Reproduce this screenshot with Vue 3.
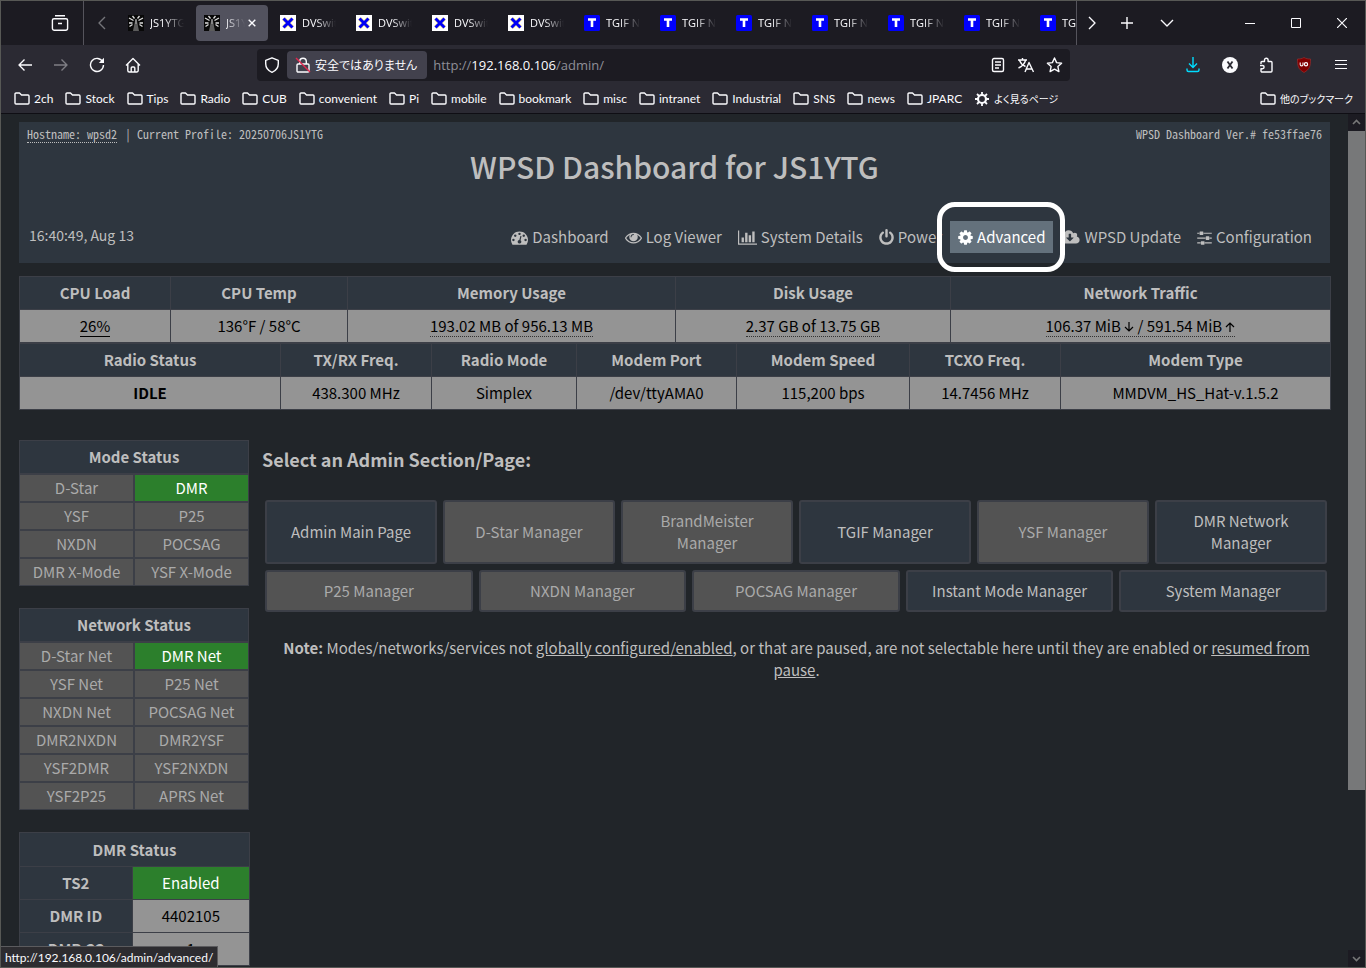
<script setup>
const tabs = [
  { kind: 'mast', title: 'JS1YTG' },
  { kind: 'mast', title: 'JS1YTG', active: true },
  ...Array.from({ length: 4 }, () => ({ kind: 'x', title: 'DVSwitch' })),
  ...Array.from({ length: 7 }, () => ({ kind: 't', title: 'TGIF Net' })),
]

const bookmarks = ['2ch', 'Stock', 'Tips', 'Radio', 'CUB', 'convenient', 'Pi', 'mobile', 'bookmark', 'misc', 'intranet', 'Industrial', 'SNS', 'news', 'JPARC']

const navLinks = [
  { label: 'Dashboard', box: '0 0 1792 1792', size: 'w17', d: 'M384 1152q0-53-37.5-90.5t-90.5-37.5-90.5 37.5-37.5 90.5 37.5 90.5 90.5 37.5 90.5-37.5 37.5-90.5zm192-448q0-53-37.5-90.5t-90.5-37.5-90.5 37.5-37.5 90.5 37.5 90.5 90.5 37.5 90.5-37.5 37.5-90.5zm428 481l101-382q6-26-7.5-48.5t-38.5-29.5-48 6.5-30 39.5l-101 382q-60 5-107 43.5t-63 98.5q-20 77 20 146t117 89 146-20 89-117q16-60-6-117t-72-91zm660-33q0-53-37.5-90.5t-90.5-37.5-90.5 37.5-37.5 90.5 37.5 90.5 90.5 37.5 90.5-37.5 37.5-90.5zm-640-640q0-53-37.5-90.5t-90.5-37.5-90.5 37.5-37.5 90.5 37.5 90.5 90.5 37.5 90.5-37.5 37.5-90.5zm448 192q0-53-37.5-90.5t-90.5-37.5-90.5 37.5-37.5 90.5 37.5 90.5 90.5 37.5 90.5-37.5 37.5-90.5zm320 448q0 261-141 483-19 29-54 29h-1402q-35 0-54-29-141-221-141-483 0-182 71-348t191-286 286-191 348-71 348 71 286 191 191 286 71 348z' },
  { label: 'Log Viewer', box: '0 0 1792 1792', size: 'w17', d: 'M1664 960q-152-236-381-353 61 104 61 225 0 185-131.5 316.5t-316.5 131.5-316.5-131.5-131.5-316.5q0-121 61-225-229 117-381 353 133 205 333.5 326.5t434.5 121.5 434.5-121.5 333.5-326.5zm-720-384q0-20-14-34t-34-14q-125 0-214.5 89.5t-89.5 214.5q0 20 14 34t34 14 34-14 14-34q0-86 61-147t147-61q20 0 34-14t14-34zm848 384q0 34-20 69-140 230-376.5 368.5t-499.5 138.5-499.5-139-376.5-368q-20-35-20-69t20-69q140-229 376.5-368t499.5-139 499.5 139 376.5 368q20 35 20 69z' },
  { label: 'System Details', box: '0 0 2048 1792', size: 'w19', d: 'M640 896v512h-256v-512h256zm384-512v1024h-256v-1024h256zm1024 1152v128h-2048v-1536h128v1408h1920zm-640-896v768h-256v-768h256zm384-384v1152h-256v-1152h256z' },
  { label: 'Power', box: '128 0 1536 1792', size: 'w15', d: 'M1664 896q0 156-61 298t-164 245-245 164-298 61-298-61-245-164-164-245-61-298q0-182 80.5-343t226.5-270q43-32 95.5-25t83.5 50q32 42 24.5 94.5t-49.5 84.5q-98 74-151.5 181t-53.5 228q0 104 40.5 198.5t109.5 163.5 163.5 109.5 198.5 40.5 198.5-40.5 163.5-109.5 109.5-163.5 40.5-198.5q0-121-53.5-228t-151.5-181q-42-32-49.5-84.5t24.5-94.5q31-43 84-50t95 25q146 109 226.5 270t80.5 343zm-640-768v640q0 52-38 90t-90 38-90-38-38-90v-640q0-52 38-90t90-38 90 38 38 90z' },
  { label: 'Advanced', active: true, box: '128 0 1536 1792', size: 'w15', d: 'M1152 896q0-106-75-181t-181-75-181 75-75 181 75 181 181 75 181-75 75-181zm512-109v222q0 12-8 23t-20 13l-185 28q-19 54-39 91 35 50 107 138 10 12 10 25t-9 23q-27 37-99 108t-94 71q-12 0-26-9l-138-108q-44 23-91 38-16 136-29 186-7 28-36 28h-222q-14 0-24.5-8.5t-11.5-21.5l-28-184q-49-16-90-37l-141 107q-10 9-25 9-14 0-25-11-126-114-165-168-7-10-7-23 0-12 8-23 15-21 51-66.5t54-70.5q-27-50-41-99l-183-27q-13-2-21-12.5t-8-23.5v-222q0-12 8-23t19-13l186-28q14-46 39-92-40-57-107-138-10-12-10-24 0-10 9-23 26-36 98.5-107.5t94.5-71.5q13 0 26 10l138 107q44-23 91-38 16-136 29-186 7-28 36-28h222q14 0 24.5 8.5t11.5 21.5l28 184q49 16 90 37l142-107q9-9 24-9 13 0 25 10 129 119 165 170 7 8 7 22 0 12-8 23-15 21-51 66.5t-54 70.5q26 50 41 98l183 28q13 2 21 12.5t8 23.5z' },
  { label: 'WPSD Update', box: '0 0 1920 1792', size: 'w19', d: 'M1280 928q0-14-9-23t-23-9h-224v-352q0-13-9.5-22.5t-22.5-9.5h-192q-13 0-22.5 9.5t-9.5 22.5v352h-224q-13 0-22.5 9.5t-9.5 22.5q0 14 9 23l352 352q9 9 23 9t23-9l351-351q10-12 10-24zm640 224q0 159-112.5 271.5t-271.5 112.5h-1088q-185 0-316.5-131.5t-131.5-316.5q0-130 70-240t188-165q-2-30-2-43 0-212 150-362t362-150q156 0 285.5 87t188.5 231q71-62 166-62 106 0 181 75t75 181q0 76-41 138 130 31 213.5 135.5t83.5 238.5z' },
  { label: 'Configuration', box: '0 0 1536 1792', size: 'w15', d: 'M352 1408v128h-352v-128h352zm352-128q26 0 45 19t19 45v256q0 26-19 45t-45 19h-256q-26 0-45-19t-19-45v-256q0-26 19-45t45-19h256zm160-384v128h-864v-128h864zm-640-512v128h-224v-128h224zm1312 1024v128h-736v-128h736zm-960-1152q26 0 45 19t19 45v256q0 26-19 45t-45 19h-256q-26 0-45-19t-19-45v-256q0-26 19-45t45-19h256zm640 512q26 0 45 19t19 45v256q0 26-19 45t-45 19h-256q-26 0-45-19t-19-45v-256q0-26 19-45t45-19h256zm320 128v128h-224v-128h224zm0-512v128h-864v-128h864z' },
]

const hardware = [
  { head: 'CPU Load', value: '26%', mark: 'solid', span: 151 },
  { head: 'CPU Temp', value: '136°F / 58°C', span: 177 },
  { head: 'Memory Usage', value: '193.02 MB of 956.13 MB', mark: 'dotted', span: 328 },
  { head: 'Disk Usage', value: '2.37 GB of 13.75 GB', mark: 'dotted', span: 275 },
  { head: 'Network Traffic', traffic: ['106.37 MiB', '/ 591.54 MiB'], mark: 'dotted', span: 380 },
]
const radio = [
  { head: 'Radio Status', value: 'IDLE', bold: true, span: 261 },
  { head: 'TX/RX Freq.', value: '438.300 MHz', span: 151 },
  { head: 'Radio Mode', value: 'Simplex', span: 145 },
  { head: 'Modem Port', value: '/dev/ttyAMA0', span: 160 },
  { head: 'Modem Speed', value: '115,200 bps', span: 173 },
  { head: 'TCXO Freq.', value: '14.7456 MHz', span: 151 },
  { head: 'Modem Type', value: 'MMDVM_HS_Hat-v.1.5.2', span: 270 },
]
const share = (n) => ({ width: (n / 1311) * 100 + '%' })

const panels = [
  { title: 'Mode Status', rows: [['D-Star', 'DMR'], ['YSF', 'P25'], ['NXDN', 'POCSAG'], ['DMR X-Mode', 'YSF X-Mode']] },
  { title: 'Network Status', rows: [['D-Star Net', 'DMR Net'], ['YSF Net', 'P25 Net'], ['NXDN Net', 'POCSAG Net'], ['DMR2NXDN', 'DMR2YSF'], ['YSF2DMR', 'YSF2NXDN'], ['YSF2P25', 'APRS Net']] },
]
const enabled = ['DMR', 'DMR Net']

const sections = [
  [
    { label: 'Admin Main Page' }, { label: 'D-Star Manager', off: true }, { label: 'BrandMeister Manager', off: true },
    { label: 'TGIF Manager' }, { label: 'YSF Manager', off: true }, { label: 'DMR Network Manager' },
  ],
  [
    { label: 'P25 Manager', off: true }, { label: 'NXDN Manager', off: true }, { label: 'POCSAG Manager', off: true },
    { label: 'Instant Mode Manager' }, { label: 'System Manager' },
  ],
]
</script>

<template>
  <div class="window">
    <header class="chrome">
      <div class="tabstrip">
        <button class="tool overview" aria-label="Recent browsing">
          <svg width="18" height="18" viewBox="0 0 18 18"><path d="M4 1.700h10M3 4.700h12a1.600 1.600 0 0 1 1.600 1.600v8a2 2 0 0 1-2 2H3.400a2 2 0 0 1-2-2v-8A1.600 1.600 0 0 1 3 4.700zM7 9.500h4" /></svg>
        </button>
        <button class="tool scroll-left" aria-label="Scroll left"><svg width="10" height="14" viewBox="0 0 10 14"><path d="M8 1L2 7l6 6" /></svg></button>
        <div class="tabs">
          <button v-for="(tab, i) in tabs" :key="i" class="tab" :class="{ active: tab.active }">
            <svg v-if="tab.kind === 'mast'" class="fav" viewBox="0 0 16 16">
              <rect width="16" height="16" fill="#080808" />
              <path d="M7.200 5h1.600L11 16H5z" fill="#5c5c5c" /><path d="M8 4v5" stroke="#999" />
              <path d="M1 3l4.500 2.500M4.500 1l2 2.500M1 8h3.500M1.500 11.500l3-2M15 3l-4.500 2.500M11.500 1l-2 2.500M15 8h-3.500M14.500 11.500l-3-2" stroke="#dedede" stroke-width="1.300" />
            </svg>
            <svg v-else-if="tab.kind === 'x'" class="fav" viewBox="0 0 16 16">
              <rect width="16" height="16" fill="#fff" /><path d="M3.500 3.500l9 9M12.500 3.500l-9 9" stroke="#ffef9a" stroke-width="4.500" /><path d="M3.500 3.500l9 9M12.500 3.500l-9 9" stroke="#0000f5" stroke-width="3" />
            </svg>
            <svg v-else class="fav" viewBox="0 0 16 16"><rect width="16" height="16" rx="1.500" fill="#0000fa" /><path d="M4 4.500h8M8 4v8" fill="none" stroke="#fff" stroke-width="2.600" /></svg>
            <span class="tab-title">{{ tab.title }}</span>
            <svg v-if="tab.active" class="tab-close" width="8" height="8" viewBox="0 0 8 8"><path d="M.7.7l6.600 6.600M7.300.7L.7 7.300" /></svg>
          </button>
        </div>
        <button class="tool after-tabs" aria-label="Scroll right"><svg width="10" height="14" viewBox="0 0 10 14"><path d="M2 1l6 6-6 6" /></svg></button>
        <button class="tool narrow" aria-label="New tab"><svg width="12" height="12" viewBox="0 0 12 12"><path d="M6 0v12M0 6h12" /></svg></button>
        <button class="tool list-tabs" aria-label="List tabs"><svg width="14" height="10" viewBox="0 0 14 10"><path d="M1 2l6 6 6-6" /></svg></button>
        <div class="window-buttons">
          <button class="tool" aria-label="Minimise"><svg width="10" height="10" viewBox="0 0 10 10"><path d="M0 5.500h10" stroke-width="1" /></svg></button>
          <button class="tool" aria-label="Maximise"><svg width="10" height="10" viewBox="0 0 10 10"><path d="M.5.5h9v9h-9z" stroke-width="1" /></svg></button>
          <button class="tool" aria-label="Close"><svg width="10" height="10" viewBox="0 0 10 10"><path d="M0 0l10 10M10 0L0 10" stroke-width="1.200" /></svg></button>
        </div>
      </div>

      <div class="toolbar">
        <div class="history">
          <button class="tool" aria-label="Back"><svg width="16" height="16" viewBox="0 0 16 16"><path d="M15 8H2M7.500 2.500L2 8l5.500 5.500" /></svg></button>
          <button class="tool dim" aria-label="Forward"><svg width="16" height="16" viewBox="0 0 16 16"><path d="M1 8h13M8.500 2.500L14 8l-5.500 5.500" /></svg></button>
          <button class="tool" aria-label="Reload"><svg width="16" height="16" viewBox="0 0 16 16"><path d="M13.800 5A6.500 6.500 0 1 0 14.500 8" /><path d="M15 .8V6H9.800z" fill="#fbfbfe" stroke="none" /></svg></button>
          <button class="tool" aria-label="Home"><svg width="16" height="16" viewBox="0 0 16 16"><path d="M1 8.500L8 1.500l7 7M2.800 7v6.500a1.500 1.500 0 0 0 1.500 1.500h7.400a1.500 1.500 0 0 0 1.500-1.500V7M6.200 15v-4a1 1 0 0 1 1-1h1.600a1 1 0 0 1 1 1v4" /></svg></button>
        </div>
        <div class="urlbar">
          <button class="tool shield" aria-label="Tracking protection"><svg width="16" height="16" viewBox="0 0 16 16"><path d="M8 .8l6.300 2.500v3.400c0 4-2.500 7-6.300 8.600C4.200 13.700 1.700 10.700 1.700 6.700V3.300z" /></svg></button>
          <button class="identity">
            <svg width="16" height="16" viewBox="0 0 16 16"><path d="M4.700 7V4.500a3.300 3.300 0 0 1 6.600 0V7M3 7h10a1 1 0 0 1 1 1v6a1 1 0 0 1-1 1H3a1 1 0 0 1-1-1V8a1 1 0 0 1 1-1z" /><path d="M1 1l14 14" class="slash" /></svg>
            安全ではありません
          </button>
          <div class="address" role="textbox" contenteditable="true" spellcheck="false" aria-label="Address">http://<span class="host">192.168.0.106</span>/admin/</div>
          <button class="tool url-tool" aria-label="Reader view"><svg width="16" height="16" viewBox="0 0 16 16"><path d="M4 1.500h8a1.500 1.500 0 0 1 1.500 1.500v10a1.500 1.500 0 0 1-1.500 1.500H4A1.500 1.500 0 0 1 2.500 13V3A1.500 1.500 0 0 1 4 1.500zM5 5h6M5 8h6M5 11h4" /></svg></button>
          <button class="tool url-tool" aria-label="Translate"><svg width="18" height="16" viewBox="0 0 18 16"><path d="M1 3h9M5.500 1v2M2.500 3.500C4 7 6 8.500 8.500 9.500M8.500 3.500C7.500 7 5 9.500 1.500 11M8 15l4-9.500 4.500 9.500M9.500 12h5.500" /></svg></button>
          <button class="tool url-tool" aria-label="Bookmark"><svg width="17" height="16" viewBox="0 0 16 16"><path d="M8 1l2.100 4.600 5 .6-3.700 3.400 1 5L8 12.100 3.600 14.600l1-5L.9 6.200l5-.6z" /></svg></button>
        </div>
        <div class="extensions">
          <button class="tool" aria-label="Downloads"><svg class="cyan" width="14" height="16" viewBox="0 0 14 16"><path d="M7 0v10.500M3 6.500l4 4 4-4M1 11.500V13a1.500 1.500 0 0 0 1.500 1.500h9A1.500 1.500 0 0 0 13 13v-1.500" /></svg></button>
          <button class="tool" aria-label="Account"><svg width="16" height="16" viewBox="0 0 16 16"><circle cx="8" cy="8" r="8" fill="#fbfbfe" stroke="none" /><path d="M5.500 4.500l5 7M10.500 4.500l-5 7" stroke="#2b2a33" stroke-width="1.800" /></svg></button>
          <button class="tool" aria-label="Extensions"><svg width="16" height="16" viewBox="0 0 16 16"><path d="M2 7V5.500a1 1 0 0 1 1-1h2.500V3a1.800 1.800 0 0 1 3.600 0v1.500H12a1 1 0 0 1 1 1V14a1 1 0 0 1-1 1H3a1 1 0 0 1-1-1v-2.300h1.500a1.600 1.600 0 0 0 0-3.200H1" /></svg></button>
          <button class="tool" aria-label="uBlock Origin"><svg width="16" height="16" viewBox="0 0 16 16"><path d="M8 .5c2 1.200 4 1.500 6.500 1.500 0 7-.5 10-6.500 13.500C2 12 1.500 9 1.500 2 4 2 6 1.700 8 .5z" fill="#800000" stroke="#a23030" stroke-width=".6" /><path d="M4.200 5.500v2a1.300 1.300 0 0 0 2.800 0v-2" stroke-width="1.100" /><circle cx="10" cy="7.200" r="1.600" stroke-width="1.200" /></svg></button>
          <button class="tool" aria-label="Menu"><svg width="12" height="12" viewBox="0 0 12 12"><path d="M0 1.500h12M0 5.500h12M0 9.500h12" stroke-width="1.200" /></svg></button>
        </div>
      </div>

      <nav class="bookmarks" aria-label="Bookmarks">
        <a v-for="name in bookmarks" :key="name" href="#"><svg class="folder" width="16" height="16" viewBox="0 0 16 16"><path d="M2 2h3.500l2 2H14a1 1 0 0 1 1 1v7a1 1 0 0 1-1 1H2a1 1 0 0 1-1-1V3a1 1 0 0 1 1-1z" /></svg>{{ name }}</a>
        <a href="#"><svg width="16" height="16" viewBox="0 0 16 16"><circle cx="8" cy="8" r="4" stroke-width="2.200" /><path d="M8 1v3M8 12v3M1 8h3M12 8h3M3 3l2.200 2.200M10.800 10.800L13 13M13 3l-2.200 2.200M5.200 10.800L3 13" stroke-width="1.800" /></svg><span class="ja">よく見るページ</span></a>
        <a href="#" class="other"><svg class="folder" width="16" height="16" viewBox="0 0 16 16"><path d="M2 2h3.500l2 2H14a1 1 0 0 1 1 1v7a1 1 0 0 1-1 1H2a1 1 0 0 1-1-1V3a1 1 0 0 1 1-1z" /></svg><span class="ja">他のブックマーク</span></a>
      </nav>
    </header>

    <div class="viewport">
      <main class="page">
        <section class="banner">
          <div class="meta">
            <span><a href="#" class="hostname">Hostname: wpsd2</a> | Current Profile: 20250706JS1YTG</span>
            <span>WPSD Dashboard Ver.# fe53ffae76</span>
          </div>
          <h1>WPSD Dashboard for JS1YTG</h1>
          <div class="navrow">
            <time>16:40:49, Aug 13</time>
            <nav class="mainnav">
              <a v-for="link in navLinks" :key="link.label" href="#" :class="{ active: link.active }">
                <svg :class="link.size" :viewBox="link.box"><path :d="link.d" /></svg>{{ link.label }}
              </a>
            </nav>
          </div>
        </section>

        <div class="info">
          <table v-for="(cols, t) in [hardware, radio]" :key="t">
            <colgroup><col v-for="c in cols" :key="c.head" :style="share(c.span)" /></colgroup>
            <thead><tr><th v-for="c in cols" :key="c.head">{{ c.head }}</th></tr></thead>
            <tbody>
              <tr>
                <td v-for="c in cols" :key="c.head" :class="{ bold: c.bold }">
                  <span :class="c.mark">
                    <template v-if="c.traffic">
                      {{ c.traffic[0] }}
                      <svg class="arrow" viewBox="0 0 10 10"><path d="M5 0v9M1 5l4 4 4-4" /></svg>
                      {{ c.traffic[1] }}
                      <svg class="arrow" viewBox="0 0 10 10"><path d="M5 10V1M1 5l4-4 4 4" /></svg>
                    </template>
                    <template v-else>{{ c.value }}</template>
                  </span>
                </td>
              </tr>
            </tbody>
          </table>
        </div>

        <div class="columns">
          <aside class="side">
            <table v-for="p in panels" :key="p.title" class="status">
              <thead><tr><th colspan="2">{{ p.title }}</th></tr></thead>
              <tbody>
                <tr v-for="row in p.rows" :key="row[0]">
                  <td v-for="cell in row" :key="cell" :class="{ on: enabled.includes(cell) }">{{ cell }}</td>
                </tr>
              </tbody>
            </table>
            <table class="dmr">
              <colgroup><col class="key" /><col /></colgroup>
              <thead><tr><th colspan="2">DMR Status</th></tr></thead>
              <tbody>
                <tr><th scope="row">TS2</th><td class="on">Enabled</td></tr>
                <tr><th scope="row">DMR ID</th><td>4402105</td></tr>
                <tr><th scope="row">DMR CC</th><td>1</td></tr>
              </tbody>
            </table>
          </aside>

          <section class="admin">
            <h2>Select an Admin Section/Page:</h2>
            <div class="sections">
              <div v-for="(row, r) in sections" :key="r" class="section-row">
                <button v-for="s in row" :key="s.label" :disabled="s.off">{{ s.label }}</button>
              </div>
            </div>
            <p class="note"><b>Note:</b> Modes/networks/services not <a href="#">globally configured/enabled</a>, or that are paused, are not selectable here until they are enabled or <a href="#">resumed from pause</a>.</p>
          </section>
        </div>
        <div class="highlight"></div>
      </main>
      <div class="scrollbar" aria-hidden="true">
        <svg width="17" height="17" viewBox="0 0 17 17"><path d="M5 10l3.500-3.500L12 10" /></svg>
        <div class="thumb"></div>
        <svg class="down" width="17" height="17" viewBox="0 0 17 17"><path d="M5 7l3.500 3.500L12 7" /></svg>
      </div>
      <div class="link-status">http://192.168.0.106/admin/advanced/</div>
    </div>
  </div>
</template>

<style>
html, body { margin: 0; background: #212529; }
</style>

<style scoped>
* { box-sizing: border-box; }
button { border: 0; padding: 0; margin: 0; background: none; color: inherit; font: inherit; }
a { color: inherit; text-decoration: none; }
svg { flex: none; }

.window { display: flex; flex-direction: column; height: 100vh; border: 1px solid #575855; overflow: hidden; }

.chrome { flex: none; color: #fbfbfe; background: #2b2a33; border-bottom: 1px solid #0f0e14; font: 12px/16px Lato, "Noto Sans CJK JP", sans-serif; }
.chrome svg { fill: none; stroke: #fbfbfe; stroke-width: 1.4; stroke-linejoin: round; }
.chrome .fav { width: 16px; height: 16px; stroke: none; }
.tool { display: flex; align-items: center; justify-content: center; width: 36px; height: 32px; }

.tabstrip { display: flex; align-items: center; height: 44px; background: #1c1b22; }
.tabstrip .tool { height: 44px; }
.tabstrip .overview { width: 83px; padding-left: 36px; border-right: 1px solid #55545c; }
.scroll-left { opacity: .4; }
.tabstrip .scroll-left { width: 36px; }
.tabs { flex: 1; min-width: 0; display: flex; gap: 4px; overflow: hidden; }
.tab { flex: none; display: flex; align-items: center; width: 72px; height: 36px; padding: 0 8px; border-radius: 4px; }
.tab.active { background: #52525e; }
.tab-title { flex: 1; min-width: 0; margin-left: 6px; overflow: hidden; white-space: nowrap; text-align: left; font-family: "Open Sans", sans-serif; font-size: 11px; line-height: 18px; mask-image: linear-gradient(to left, transparent, #000 20px); }
.tab-close { margin-left: 3px; margin-right: 4px; }
.tabstrip .after-tabs { width: 30px; border-left: 1px solid #55545c; }
.tabstrip .narrow { width: 42px; }
.tabstrip .list-tabs { width: 38px; }
.window-buttons { display: flex; margin-left: 41px; }
.window-buttons .tool { width: 46px; }

.toolbar { display: flex; align-items: center; height: 40px; }
.history { display: flex; flex: none; width: 256px; padding-left: 6px; }
.dim { opacity: .4; }
.urlbar { display: flex; flex: 1; align-items: center; height: 32px; background: #1c1b22; border-radius: 4px; padding-right: 2px; }
.shield { width: 30px; }
.identity { display: flex; align-items: center; gap: 4px; height: 28px; padding: 0 10px 0 8px; border-radius: 4px; background: #42414d; font: 12px/20px "Noto Sans CJK JP", sans-serif; font-feature-settings: "palt"; white-space: nowrap; }
.slash { stroke: #e22850; }
.address { flex: 1; min-width: 0; margin-left: 6px; font-family: "Open Sans", sans-serif; font-size: 13px; line-height: 20px; color: #8f8f98; outline: none; white-space: nowrap; }
.host { color: #fbfbfe; }
.url-tool { width: 28px; height: 28px; }
.extensions { display: flex; flex: none; width: 295px; justify-content: flex-end; padding-right: 6px; }
.extensions .tool { width: 37px; }
.chrome .cyan { stroke: #00ddff; }

.bookmarks { display: flex; gap: 12px; height: 28px; align-items: center; padding: 0 12px 0 13px; white-space: nowrap; }
.bookmarks a { display: flex; align-items: center; gap: 4px; }
.bookmarks .other { margin-left: auto; }
.folder { stroke-width: 1.2; }
.ja { font-family: "Noto Sans CJK JP", sans-serif; font-size: 10px; font-feature-settings: "palt"; }

.viewport { position: relative; display: flex; flex: 1; min-height: 0; background: #212529; overflow: hidden; }
.page { position: relative; flex: 1; min-width: 0; padding: 8px 17px 0 18px; color: #bebebe; font: 15px/22px "Noto Sans CJK JP", sans-serif; overflow: hidden; }

.banner { display: flex; flex-direction: column; height: 141px; margin-right: 1px; padding: 4px 8px; background: #2e363f; }
.meta { display: flex; justify-content: space-between; font: 12px/16px "Noto Sans Mono CJK JP", "Liberation Mono", monospace; }
.hostname { margin-right: 2px; border-bottom: 1px dotted #bebebe; }
h1 { margin: 2px 0 0; text-align: center; font-size: 30px; line-height: 44px; font-weight: 500; }
.navrow { display: flex; align-items: flex-start; justify-content: space-between; margin-top: 33px; padding: 0 2px; }
time { font-size: 14px; line-height: 28px; }
.mainnav { display: flex; }
.mainnav a { display: flex; align-items: center; gap: 4px; height: 32px; padding: 0 8px; white-space: nowrap; }
.mainnav svg { height: 17px; fill: currentColor; }
.mainnav .active { background: #64717c; color: #fff; }
.w15 { width: 15px; }
.w17 { width: 17px; }
.w19 { width: 19px; }

.info { margin-top: 13px; }
table { border-spacing: 0; table-layout: fixed; width: 100%; text-align: center; }
th { font-weight: 700; color: #bebebe; background: #2e363f; }
th, td { padding: 0; }
.info table { border-collapse: collapse; }
.info th, .info td { height: 33px; border: 1px solid #3c3f47; }
.info td { background: #949494; color: #000; }
.info .bold { font-weight: 700; }
.solid { border-bottom: 1px solid #000; }
.dotted { border-bottom: 1px dotted #333; }
.arrow { width: 10px; height: 10px; fill: none; stroke: #000; stroke-width: 1.2; }

.columns { display: flex; gap: 12px; margin-top: 30px; }
.side { flex: none; width: 231px; }
.side table { margin-bottom: 22px; }
.side .status { width: 230px; }
.status th, .status td { border: 1px solid #3c3f47; }
.side thead th { height: 34px; }
.status td { height: 28px; background: #535353; color: #aaa; }
.dmr { border-collapse: collapse; }
.dmr .key { width: 49%; }
.dmr th, .dmr td { height: 33px; border: 1px solid #3c3f47; }
.dmr td { background: #949494; color: #000; }
.side .on { background: #2c7f2c; color: #fff; }

.admin { flex: 1; min-width: 0; }
h2 { margin: 7px 0 0; font-size: 18px; line-height: 24px; font-weight: 700; }
.sections { display: flex; flex-direction: column; gap: 6px; padding: 29px 4px 0 3px; }
.section-row { display: flex; gap: 6px; }
.section-row button { flex: 1 1 0; min-width: 0; min-height: 42px; padding: 8px 24px; border: 2px solid #3c3f47; border-radius: 3px; background: #2e363f; color: #bebebe; }
.section-row button:disabled { background: #535353; color: #aaa; }
.note { margin: 25px 0 0; text-align: center; }
.note a { text-decoration: underline; }

.highlight { position: absolute; left: 936px; top: 88px; width: 128px; height: 70px; border: 5px solid #fff; border-radius: 18px; }

.scrollbar { display: flex; flex-direction: column; flex: none; width: 17px; background: #212529; }
.scrollbar svg { fill: none; stroke: #777; stroke-width: 1.6; background: #1c1b22; }
.thumb { height: 659px; background: #777879; }
.scrollbar .down { margin-top: auto; }
.link-status { position: absolute; left: 0; bottom: 0; height: 21px; padding: 2px 4px 0; border: 1px solid #5b5b5e; border-width: 1px 1px 0 0; background: #2d2c30; color: #fbfbfe; font: 12px/17px Lato, sans-serif; }
</style>
